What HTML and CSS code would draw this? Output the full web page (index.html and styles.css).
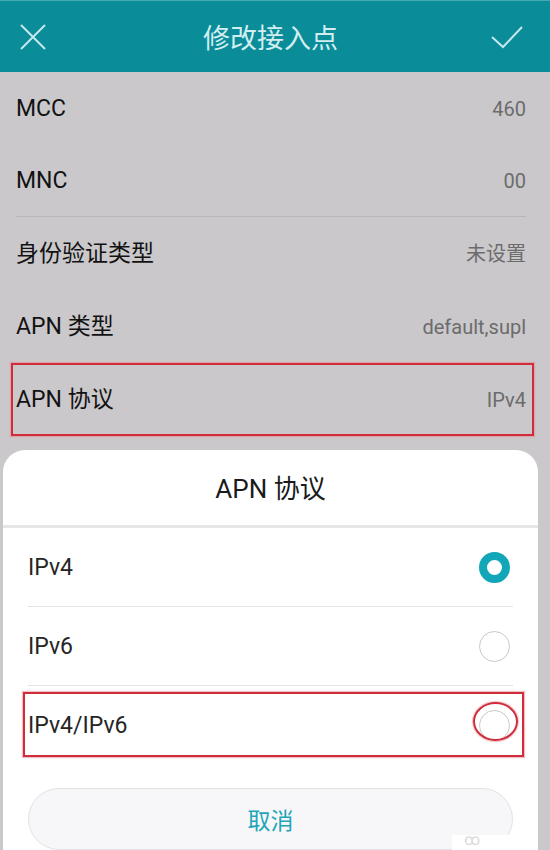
FILE: index.html
```html
<!DOCTYPE html>
<html lang="zh-CN">
<head>
    <meta charset="UTF-8">
    <meta name="viewport" content="width=device-width, initial-scale=1.0">
    <title>修改接入点</title>
    <link rel="stylesheet" href="styles.css">
</head>
<body>
    <div class="screen">
        <div class="top-bar">
            <span class="bar-icon">
                <svg width="28" height="28" viewBox="0 0 28 28"><path d="M2 2 L26 26 M26 2 L2 26" stroke="#c4e8ec" stroke-width="2" fill="none"/></svg>
            </span>
            <span class="bar-title">修改接入点</span>
            <span class="bar-icon">
                <svg width="34" height="24" viewBox="0 0 34 24"><path d="M2 12 L13 22 L32 2" stroke="#c4e8ec" stroke-width="2" fill="none"/></svg>
            </span>
        </div>

        <div class="settings">
            <div class="setting-row"><span class="label">MCC</span><span class="value">460</span></div>
            <div class="setting-row divided"><span class="label">MNC</span><span class="value">00</span></div>
            <div class="setting-row"><span class="label">身份验证类型</span><span class="value">未设置</span></div>
            <div class="setting-row"><span class="label">APN 类型</span><span class="value">default,supl</span></div>
            <div class="setting-row">
                <span class="label">APN 协议</span><span class="value">IPv4</span>
                <div class="mark mark-row"></div>
            </div>
        </div>

        <div class="sheet">
            <div class="sheet-title">APN 协议</div>
            <div class="options">
                <div class="option"><span>IPv4</span><span class="radio checked"></span></div>
                <div class="option"><span>IPv6</span><span class="radio"></span></div>
                <div class="option last">
                    <span>IPv4/IPv6</span>
                    <span class="radio"><span class="mark mark-radio"></span></span>
                    <div class="mark mark-option"></div>
                </div>
            </div>
            <div class="cancel-btn">取消</div>
            <div class="watermark">ꝏ</div>
        </div>
    </div>
</body>
</html>
```

FILE: styles.css
```css
body { margin: 0; padding: 0; background-color: #cac8cb; font-family: Roboto, "Noto Sans CJK SC", sans-serif; }
.screen { width: 550px; height: 850px; overflow: hidden; }

.top-bar { height: 71px; border-top: 1px solid #46a9b2; background-color: #0a8c99; display: flex; align-items: center; justify-content: space-between; padding: 0 26px 0 19px; }
.bar-icon { display: flex; align-items: center; }
.bar-title { color: #d2eef1; font-size: 27px; margin-left: 4px; }

.settings { padding: 0 24px 0 16px; }
.setting-row { position: relative; height: 73px; display: flex; align-items: center; justify-content: space-between; }
.setting-row.divided { height: 71px; border-bottom: 1px solid #b8b6b9; }
.label { font-size: 23px; color: #121212; line-height: 1; }
.value { font-size: 20px; color: #6c6c6c; line-height: 1; }

.mark { position: absolute; border: 2px solid #cf2d3b; box-shadow: 0 0 1px 1px rgba(235, 130, 140, 0.5); }
.mark-row { left: -5px; right: -8px; top: 0; bottom: 0; }

.sheet { position: relative; margin: 14px 0 0 3px; width: 535px; height: 400px; background: #fff; border-radius: 22px 22px 0 0; overflow: hidden; }
.sheet-title { height: 75px; line-height: 78px; text-align: center; font-size: 26px; color: #1a1a1a; border-bottom: 3px solid #e6e6e6; }

.options { padding: 0 25px; }
.option { position: relative; height: 78px; border-bottom: 1px solid #e4e4e4; display: flex; align-items: center; justify-content: space-between; font-size: 23px; color: #252525; }
.option.last { border-bottom: none; }
.radio { position: relative; width: 31px; height: 31px; box-sizing: border-box; border: 1.5px solid #c9c9c9; border-radius: 50%; margin-right: 3px; }
.radio.checked { border: 8.5px solid #12a6b9; }
.mark-option { left: -5px; right: -11px; top: 6px; bottom: 7px; }
.mark-radio { left: -7px; top: -9px; width: 41px; height: 35px; border-radius: 50%; border-width: 2.5px; }

.cancel-btn { margin: 24px 25px 0; height: 62px; box-sizing: border-box; border: 1px solid #e2e1e4; border-radius: 31px; background: #f7f6f8; color: #1ea6b6; font-size: 23px; display: flex; align-items: center; justify-content: center; }
.watermark { position: absolute; right: 20px; bottom: 0; width: 66px; height: 15px; background: #fff; color: #dadada; font-size: 16px; line-height: 10px; padding-left: 12px; box-sizing: border-box; }
```
